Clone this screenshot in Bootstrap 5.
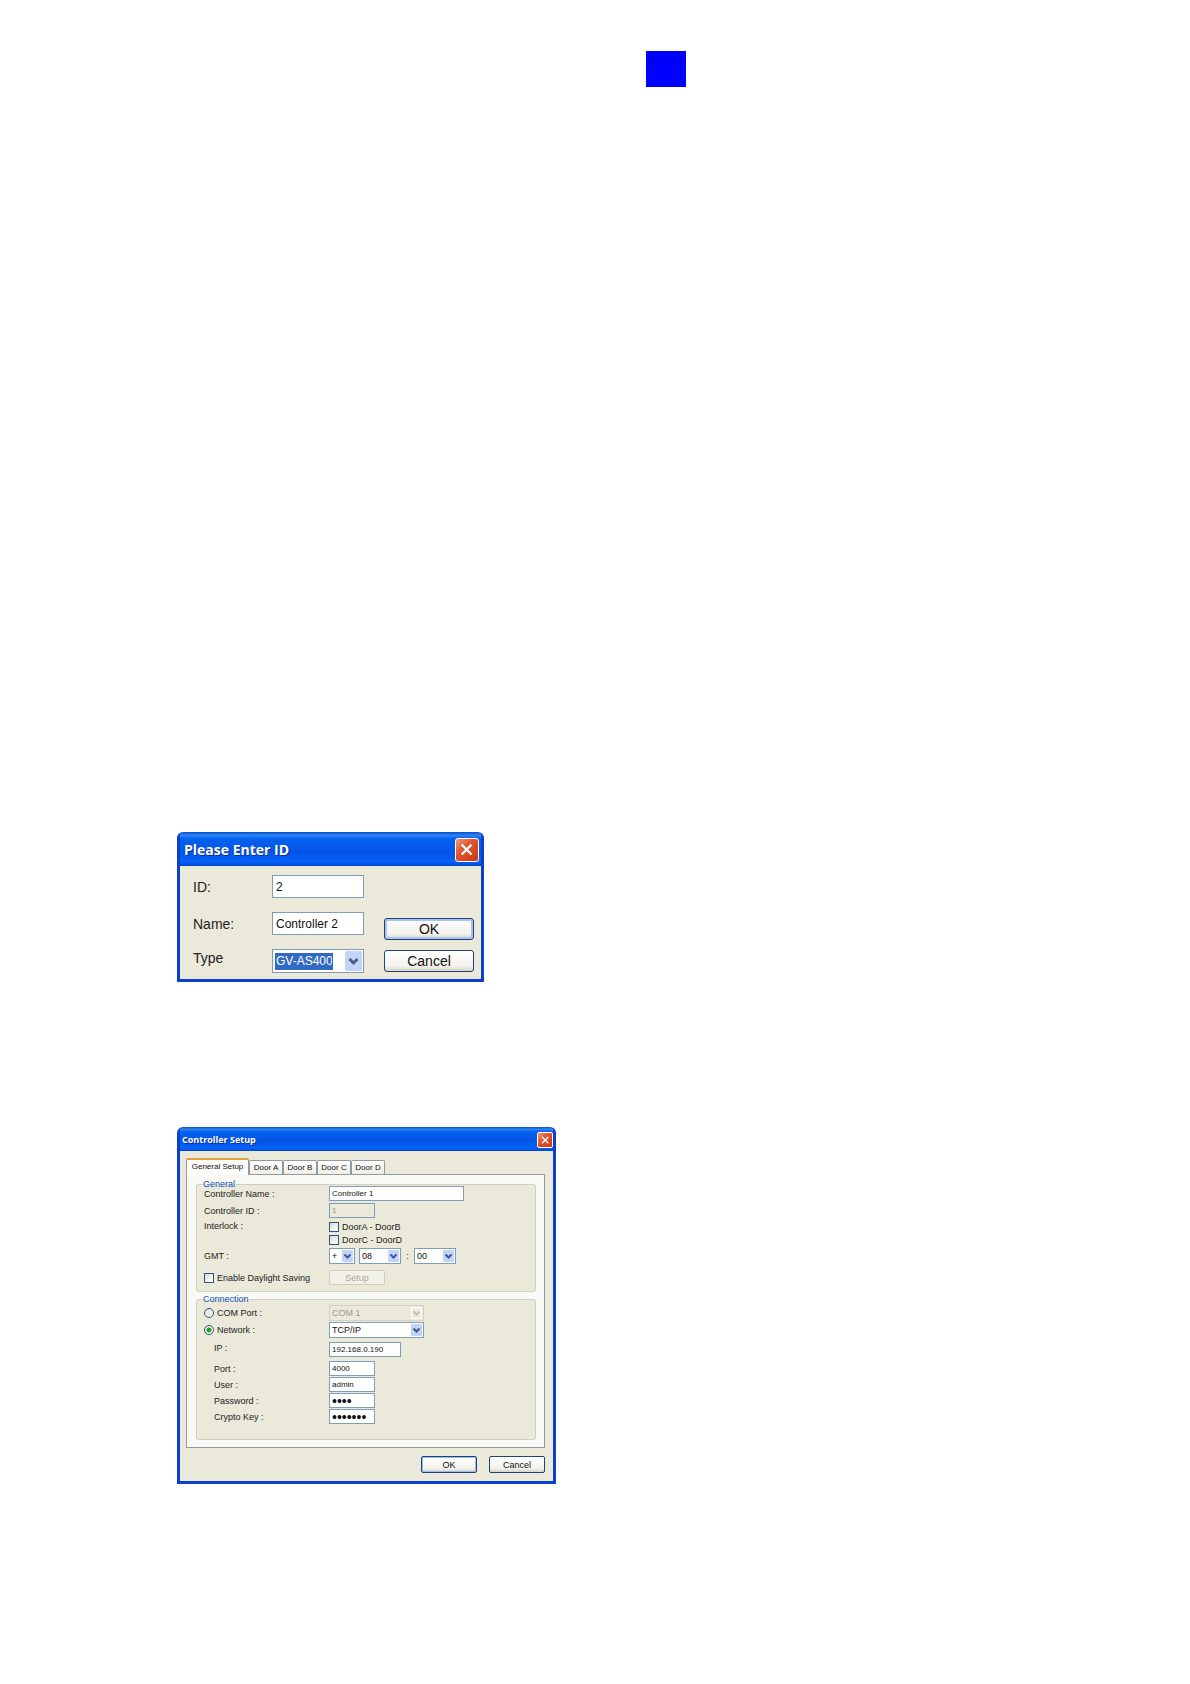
<!DOCTYPE html>
<html lang="en">
<head>
<meta charset="utf-8">
<meta name="viewport" content="width=device-width, initial-scale=1">
<title>Controller Setup</title>
<link href="https://cdn.jsdelivr.net/npm/bootstrap@5.3.0/dist/css/bootstrap.min.css" rel="stylesheet">
<style>
body { font-family: "Liberation Sans", Arial, sans-serif; font-size: 9px; line-height: 12px; color: #222; background: #fff; }
.sheet { padding: 51px 20px 60px 177px; }
.marker { width: 40px; height: 36px; margin-left: 469px; background: #00f; }

/* windows */
.win { background: #ebe9d9; border: 3px solid #0a3fd0; border-top: 0; border-radius: 6px 6px 0 0; overflow: hidden; }
.win-id { max-width: 307px; margin-top: 745px; }
.win-setup { max-width: 379px; margin-top: 145px; }
.titlebar { margin: 0 -3px; color: #fff; font-family: "Open Sans", sans-serif; font-weight: 700; text-shadow: 1px 1px 0 #0a2f9c;
  background: linear-gradient(#0a4fc8 0, #2b84f5 10%, #0560ee 20%, #0455e6 60%, #0563fa 88%, #0345c8 100%); }
.titlebar h1 { font: inherit; margin: 0; }
.win-id .titlebar { height: 34px; padding: 2px 5px 0 7px; font-size: 14px; line-height: 20px; }
.win-setup .titlebar { height: 24px; padding: 2px 3px 0 5px; font-size: 9px; }
.close-x { border: 1px solid #fff; border-radius: 3px; padding: 0; display: grid; place-items: center;
  background: linear-gradient(135deg, #f0987c, #e0552f 40%, #c63a12); }
.win-id .close-x { width: 24px; height: 24px; }
.win-setup .close-x { width: 16px; height: 16px; border-radius: 2px; }
.close-x svg { width: 60%; height: 60%; }

/* controls */
.xp-box { border: 1px solid #7f9db9; border-radius: 0; background-color: #fff; color: #111; padding: 0 2px; margin: 0; height: 15px; font-size: 8px; line-height: 12px; min-width: 0; }
.xp-box:disabled { background-color: #ebe9d9; color: #9a9a8c; opacity: 1; }
.xp-select { appearance: none; font-size: 9px; height: 16px; background-repeat: no-repeat; background-position: right 1px center; background-size: 11px 12px;
  background-image: url("data:image/svg+xml,%3Csvg xmlns='http://www.w3.org/2000/svg' viewBox='0 0 11 12'%3E%3Crect width='11' height='12' rx='1' fill='%23c1d2fb'/%3E%3Cpath d='M2.5 4.5l3 3 3-3' fill='none' stroke='%23405a8c' stroke-width='2'/%3E%3C/svg%3E"); }
.xp-select:disabled { border-color: #d2d0c0;
  background-image: url("data:image/svg+xml,%3Csvg xmlns='http://www.w3.org/2000/svg' viewBox='0 0 11 12'%3E%3Crect x='.5' y='.5' width='10' height='11' fill='%23eeece0' stroke='%23fff'/%3E%3Cpath d='M2.5 4.5l3 3 3-3' fill='none' stroke='%23c4c2b4' stroke-width='2'/%3E%3C/svg%3E"); }
.xp-btn { border: 1px solid #1c4478; border-radius: 2px; color: #111; padding: 0; font-size: 9px; line-height: 12px; height: 17px; width: 56px;
  background: linear-gradient(#fff, #f3f2ec 75%, #d8d3c6); }
.xp-btn.primary { box-shadow: inset 0 0 0 1px #9dbaee; }
.xp-btn:disabled { border-color: #d0cebf; color: #aaa898; background: #f2f1e8; height: 15px; }
.win-id .xp-btn { font-size: 14px; width: 90px; height: 22px; border-radius: 3px; }
.win-id .xp-btn.primary { box-shadow: inset 0 0 0 2px #a9c2ef; }
.xp-pwd { font-size: 14px; }
.w-s { width: 46px; } .w-ip { width: 72px; } .w-m { width: 95px; } .w-l { width: 135px; }
.w-sign { width: 26px; } .w-num { width: 42px; }
.tick, .dot { appearance: none; flex: none; width: 10px; height: 10px; margin: 0; border: 1px solid #2c5482; background: linear-gradient(135deg, #dcdcd6, #fff); }
.dot { border-radius: 50%; }
.dot:checked { background: radial-gradient(circle, #22a322 0 2px, #f4f4f0 3px); }

/* ID window */
.id-body { padding: 9px 7px 7px 13px; }
.id-row { height: 23px; }
.id-row label { width: 79px; font-size: 14px; line-height: 18px; }
.id-row .field { width: 92px; height: 23px; font-size: 12px; line-height: 16px; padding: 0 3px; }
.id-fields { display: grid; row-gap: 14px; }
.combo { border: 1px solid #7f9db9; background: #fff; width: 92px; height: 24px; padding: 0 1px 0 2px; }
.combo select { appearance: none; border: 0; padding: 0 1px; width: 58px; height: 17px; font-size: 12px; line-height: 16px; color: #fff; background: #316ac5; }
.combo svg { width: 17px; height: 20px; }
.id-actions { gap: 10px; margin-left: 20px; }

/* setup window */
.setup-body { padding: 7px 8px 8px 6px; }
.tabs button { font-size: 8px; line-height: 10px; height: 14px; padding: 0; width: 34px; border: 1px solid #919b9c; border-bottom: 0; border-radius: 2px 2px 0 0; color: #111; background: linear-gradient(#fff, #efeee6); }
.tabs button.current { position: relative; width: 63px; height: 17px; padding-bottom: 2px; margin-bottom: -1px; background: #fdfdfb; border-top: 2px solid #e5a03c; }
.pane { border: 1px solid #919b9c; background: #f9f9f5; padding: 8px 8px 7px 9px; }
.group { border: 1px solid #d0d0bf; border-radius: 3px; background: #ebe9d9; padding: 0 7px 6px; min-width: 0; }
.group legend { float: none; width: auto; height: 3px; line-height: 3px; font-size: 9px; margin: 0; padding: 0 1px; color: #0c4fc0; margin-left: -2px; }
.group + .group { margin-top: 6px; padding-bottom: 15px; }
.line { display: flex; align-items: center; min-height: 15px; }
.cap { width: 125px; flex: none; }
.cap.sub { padding-left: 10px; }
.choice { display: flex; align-items: center; gap: 3px; height: 13px; }
.colon { width: 13px; text-align: center; }
.stack { display: grid; row-gap: 1px; }
.stack-gen { row-gap: 2px; }
.net, .ports { margin-top: 4px; }
.setup-actions { gap: 12px; margin-top: 8px; }
</style>
</head>
<body>
<main class="sheet">
  <div class="marker"></div>

  <section class="win win-id" aria-label="Please Enter ID">
    <header class="titlebar d-flex align-items-center justify-content-between">
      <h1>Please Enter ID</h1>
      <button type="button" class="close-x" aria-label="Close"><svg viewBox="0 0 12 12"><path d="M1.5 1.5l9 9M10.5 1.5l-9 9" stroke="#fff" stroke-width="2"/></svg></button>
    </header>
    <form class="id-body d-flex align-items-end">
      <div class="id-fields">
        <div class="id-row d-flex align-items-center"><label for="id">ID:</label><input id="id" class="xp-box field" value="2"></div>
        <div class="id-row d-flex align-items-center"><label for="nm">Name:</label><input id="nm" class="xp-box field" value="Controller 2"></div>
        <div class="id-row d-flex align-items-start"><label for="ty">Type</label>
          <div class="combo d-flex align-items-center justify-content-between">
            <select id="ty"><option>GV-AS400</option></select>
            <svg viewBox="0 0 17 20"><rect width="17" height="20" rx="2" fill="#c3d3fa"/><path d="M4.500 8l4 4 4-4" fill="none" stroke="#4a5f88" stroke-width="3"/></svg>
          </div>
        </div>
      </div>
      <div class="id-actions d-flex flex-column">
        <button type="button" class="xp-btn primary">OK</button>
        <button type="button" class="xp-btn">Cancel</button>
      </div>
    </form>
  </section>

  <section class="win win-setup" aria-label="Controller Setup">
    <header class="titlebar d-flex align-items-center justify-content-between">
      <h1>Controller Setup</h1>
      <button type="button" class="close-x" aria-label="Close"><svg viewBox="0 0 12 12"><path d="M1.500 1.500l9 9M10.500 1.500l-9 9" stroke="#fff" stroke-width="2"/></svg></button>
    </header>
    <form class="setup-body">
      <div class="tabs d-flex align-items-end" role="tablist">
        <button type="button" role="tab" class="current" aria-selected="true">General Setup</button>
        <button type="button" role="tab">Door A</button>
        <button type="button" role="tab">Door B</button>
        <button type="button" role="tab">Door C</button>
        <button type="button" role="tab">Door D</button>
      </div>
      <div class="pane">
        <fieldset class="group">
          <legend>General</legend>
          <div class="stack stack-gen">
            <div class="line"><label class="cap" for="cn">Controller Name :</label><input id="cn" class="xp-box w-l" value="Controller 1"></div>
            <div class="line"><label class="cap" for="ci">Controller ID :</label><input id="ci" class="xp-box w-s" value="1" disabled></div>
            <div class="line align-items-start"><span class="cap">Interlock :</span>
              <div>
                <label class="choice"><input type="checkbox" class="tick">DoorA - DoorB</label>
                <label class="choice"><input type="checkbox" class="tick">DoorC - DoorD</label>
              </div>
            </div>
            <div class="line"><label class="cap" for="sg">GMT :</label>
              <select id="sg" class="xp-box xp-select w-sign"><option>+</option></select>
              <select class="xp-box xp-select w-num ms-1" aria-label="Hours"><option>08</option></select>
              <span class="colon">:</span>
              <select class="xp-box xp-select w-num" aria-label="Minutes"><option>00</option></select>
            </div>
            <div class="line mt-1"><label class="choice cap"><input type="checkbox" class="tick">Enable Daylight Saving</label><button type="button" class="xp-btn" disabled>Setup</button></div>
          </div>
        </fieldset>
        <fieldset class="group">
          <legend>Connection</legend>
          <div class="stack pt-1">
            <div class="line"><label class="choice cap"><input type="radio" name="link" class="dot">COM Port :</label><select class="xp-box xp-select w-m" aria-label="COM Port" disabled><option>COM 1</option></select></div>
            <div class="line"><label class="choice cap"><input type="radio" name="link" class="dot" checked>Network :</label><select class="xp-box xp-select w-m" aria-label="Network"><option>TCP/IP</option></select></div>
          </div>
          <div class="line net"><label class="cap sub align-self-start" for="ip">IP :</label><input id="ip" class="xp-box w-ip" value="192.168.0.190"></div>
          <div class="stack ports">
            <div class="line"><label class="cap sub" for="po">Port :</label><input id="po" class="xp-box w-s" value="4000"></div>
            <div class="line"><label class="cap sub" for="us">User :</label><input id="us" class="xp-box w-s" value="admin"></div>
            <div class="line"><label class="cap sub" for="pw">Password :</label><input id="pw" type="password" class="xp-box xp-pwd w-s" value="1234"></div>
            <div class="line"><label class="cap sub" for="ck">Crypto Key :</label><input id="ck" type="password" class="xp-box xp-pwd w-s" value="1234567"></div>
          </div>
        </fieldset>
      </div>
      <div class="setup-actions d-flex justify-content-end">
        <button type="button" class="xp-btn primary">OK</button>
        <button type="button" class="xp-btn">Cancel</button>
      </div>
    </form>
  </section>
</main>
<script src="https://cdn.jsdelivr.net/npm/bootstrap@5.3.0/dist/js/bootstrap.bundle.min.js"></script>
</body>
</html>
